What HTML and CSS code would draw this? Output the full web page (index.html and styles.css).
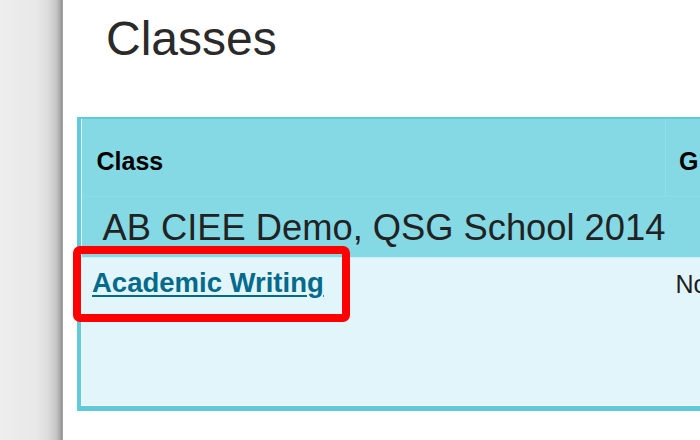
FILE: index.html
```html
<!DOCTYPE html>
<html lang="en">
<head>
<meta charset="utf-8">
<title>Classes</title>
<link rel="stylesheet" href="styles.css">
</head>
<body>
<div class="page">
  <div class="sidebar"></div>
  <main class="content">
    <h1 class="title">Classes</h1>
    <div class="table-wrap">
      <table class="classes">
        <colgroup>
          <col class="col-class">
          <col class="col-other">
        </colgroup>
        <thead>
          <tr class="head-row">
            <th class="th-class">Class</th>
            <th class="th-other">G</th>
          </tr>
        </thead>
        <tbody>
          <tr class="group-row">
            <td class="group-cell" colspan="2">AB CIEE Demo, QSG School 2014</td>
          </tr>
          <tr class="item-row">
            <td class="item-cell"><a class="class-link" href="#">Academic Writing</a></td>
            <td class="item-other">No</td>
          </tr>
        </tbody>
      </table>
      <div class="highlight"></div>
    </div>
  </main>
</div>
</body>
</html>
```

FILE: styles.css
```css
html, body {
  margin: 0;
  padding: 0;
  width: 700px;
  height: 440px;
  overflow: hidden;
  background: #ffffff;
  font-family: "Liberation Sans", Arial, Helvetica, sans-serif;
}

.page {
  display: flex;
  width: 700px;
  height: 440px;
}

.sidebar {
  flex: 0 0 63px;
  height: 440px;
  background: linear-gradient(to right, #eeeeee 0, #e8e8e8 36px, #dcdcdc 48px, #c6c6c6 56px, #aaaaaa 60px, #909090 62px, #b8b8b8 63px);
}

.content {
  flex: 1 1 auto;
  padding-left: 14px;
  min-width: 0;
}

.title {
  margin: 11px 0 0 0;
  padding-left: 29px;
  font-size: 48px;
  line-height: 55px;
  font-weight: normal;
  color: #2a2a2a;
}

.table-wrap {
  position: relative;
  margin-top: 51px;
  width: 760px;
  border-top: 2px solid #5fcad9;
  border-left: 4px solid #62cbd9;
  border-bottom: 5px solid #5fc9d8;
  background: #e1f5fa;
}

.classes {
  width: 100%;
  border-collapse: collapse;
  table-layout: fixed;
}

.col-class {
  width: 584px;
}

.head-row th {
  background: #84d9e4;
  text-align: left;
  vertical-align: top;
  font-size: 25px;
  line-height: 29px;
  font-weight: bold;
  color: #000000;
  height: 77px;
  padding: 28px 0 0 15px;
  box-sizing: border-box;
  border-bottom: 1px solid #8cdce7;
}

.head-row .th-other {
  border-left: 1px solid #92dfe9;
  padding-left: 13px;
}

.group-cell {
  background: #84d9e4;
  font-size: 36.3px;
  line-height: 41px;
  color: #222222;
  padding: 10px 0 9px 21px;
  border-bottom: 1px solid #c9eef4;
}

.item-row td {
  vertical-align: top;
  height: 148px;
  box-sizing: border-box;
  border-bottom: 1px solid #f4fbfd;
}

.item-cell {
  padding: 9px 0 0 10px;
  border-left: 1px solid #f4fbfd;
}

.class-link {
  font-size: 27.5px;
  line-height: 32px;
  font-weight: bold;
  color: #046a8c;
  text-decoration: underline;
  text-decoration-thickness: 2px;
  text-underline-offset: 3px;
}

.item-other {
  padding: 12px 0 0 10px;
  font-size: 25px;
  line-height: 29px;
  color: #1e1e1e;
}

.highlight {
  position: absolute;
  left: -8px;
  top: 127px;
  width: 277px;
  height: 76px;
  box-sizing: border-box;
  border: 8px solid #ff0000;
  border-radius: 7px;
  pointer-events: none;
}
```
